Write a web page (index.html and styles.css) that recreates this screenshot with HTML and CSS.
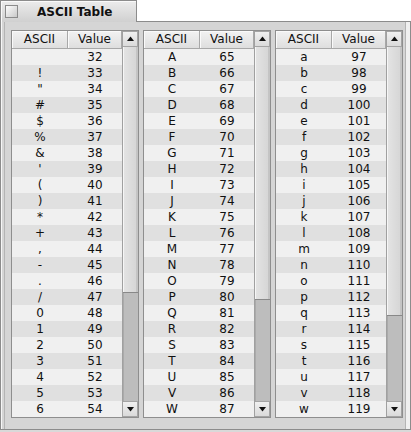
FILE: index.html
```html
<!DOCTYPE html>
<html lang="en">
  <head>
    <meta charset="UTF-8" />
    <title>ASCII Table</title>
    <link rel="stylesheet" href="styles.css">
  </head>
  <body>
    <div class="tabs">
      <div class="tab">
        <span class="box"></span>
        <span class="title">ASCII Table</span>
      </div>
      <div class="fill"></div>
    </div>
    <div class="panel">
      <div class="list" data-from="32" data-thumb="246"></div>
      <div class="list" data-from="65" data-thumb="253"></div>
      <div class="list" data-from="97" data-thumb="269"></div>
    </div>

    <script>
      let up = '<svg width="9" height="6" viewBox="0 0 9 6"><polygon points="4.5,0.5 8,5 1,5" fill="#111"/></svg>';
      let down = '<svg width="9" height="6" viewBox="0 0 9 6"><polygon points="1,1 8,1 4.5,5.5" fill="#111"/></svg>';
      let lists = document.querySelectorAll(".list");
      for (let list of lists) {
        let from = Number(list.dataset.from);
        let rows = "";
        for (let i = 0; i < 23; i++) {
          let c = String.fromCharCode(from + i);
          if (c == " ") c = "&nbsp;";
          if (c == "<") c = "&lt;";
          if (c == "&") c = "&amp;";
          rows += '<div class="row"><span>' + c + "</span><span>" + (from + i) + "</span></div>";
        }
        list.innerHTML =
          '<div class="grid"><div class="head"><span>ASCII</span><span>Value</span></div>' +
          rows +
          "</div>" +
          '<div class="sbar"><div class="btn">' + up + "</div>" +
          '<div class="track"><div class="thumb" style="height:' + list.dataset.thumb + 'px"></div></div>' +
          '<div class="btn">' + down + "</div></div>";
      }
    </script>
  </body>
</html>
```

FILE: styles.css
```css
* {
  padding: 0;
  margin: 0;
  box-sizing: border-box;
}
body {
  width: 411px;
  height: 432px;
  background: #d9d9d9;
  font-family: "DejaVu Sans", sans-serif;
  font-size: 12px;
  color: #111;
  overflow: hidden;
}
.tabs {
  display: flex;
  height: 22px;
  background: #fff;
}
.tab {
  width: 137px;
  display: flex;
  align-items: center;
  border: 1px solid #8c8c8c;
  border-bottom: none;
  background: linear-gradient(#ececec, #d0d0d0);
  box-shadow: inset 1px 1px 0 #fafafa;
  padding-left: 4px;
}
.box {
  width: 13px;
  height: 13px;
  border: 1px solid #8a8a8a;
  background: linear-gradient(135deg, #fdfdfd, #c8c8c8);
  margin-right: 19px;
}
.title {
  font-weight: bold;
  font-size: 12px;
}
.fill {
  flex: 1;
  border-bottom: 1px solid #8c8c8c;
}
.panel {
  display: flex;
  gap: 4px;
  height: 408px;
  padding: 8px 0 0 10px;
  background: #d5d5d5;
  border: 1px solid #8c8c8c;
  border-top: none;
  box-shadow: inset 1px 0 0 #f6f6f6, inset 3px 0 0 #d5d5d5, inset 4px 0 0 #b4b4b4,
    inset -4px 0 0 #f0f0f0, inset -5px 0 0 #b4b4b4;
}
.list {
  display: flex;
  width: 128px;
  height: 388px;
  border: 1px solid #8e8e8e;
  background: #efefef;
  overflow: hidden;
}
.grid {
  width: 110px;
  flex: none;
}
.head,
.row {
  display: grid;
  grid-template-columns: 56px 54px;
  text-align: center;
}
.head {
  height: 18px;
  line-height: 17px;
  border-bottom: 1px solid #a8a8a8;
  background: linear-gradient(#f2f2f2, #dedede);
}
.head span {
  border-right: 1px solid #a8a8a8;
  box-shadow: inset 1px 1px 0 #fafafa;
}
.row {
  height: 16px;
  line-height: 16px;
}
.row:nth-child(odd) {
  background: #e0e0e0;
}
.row:nth-child(even) {
  background: #f0f0f0;
}
.sbar {
  width: 16px;
  display: flex;
  flex-direction: column;
  background: #bdbdbd;
  border-left: 1px solid #a0a0a0;
}
.btn {
  height: 16px;
  flex: none;
  display: flex;
  justify-content: center;
  align-items: center;
  background: linear-gradient(#f0f0f0, #dadada);
  border: 1px solid #a4a4a4;
  border-left: none;
}
.track {
  flex: 1;
  box-shadow: inset 1px 0 0 #aaa;
}
.thumb {
  background: linear-gradient(90deg, #e4e4e4, #d4d4d4);
  border-bottom: 1px solid #888;
  box-shadow: inset 1px 0 0 #f6f6f6, inset -2px 0 0 #c4c4c4;
}
```
